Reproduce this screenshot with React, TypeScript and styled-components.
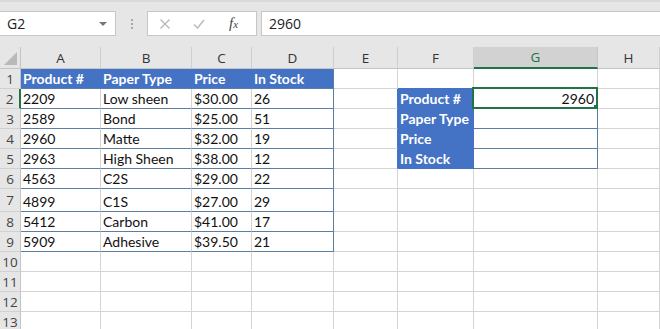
import React from 'react';
import styled, { createGlobalStyle } from 'styled-components';

const GREEN = '#217346';
const BLUE = '#4472c4';
const RULE = '#5b7ea5';
const GRID = '#d4d4d4';
const HEAD_BG = '#e6e6e6';

const GlobalStyle = createGlobalStyle`
  html, body {
    margin: 0;
    padding: 0;
    background: #fff;
    overflow: hidden;
  }
  body {
    font-family: Lato, "Open Sans", sans-serif;
  }
`;

type CellSpec = {
  text?: string;
  bold?: boolean;
  fill?: string;
  right?: boolean;
  bb?: string;
  br?: string;
  selected?: boolean;
};

const COLS = ['A', 'B', 'C', 'D', 'E', 'F', 'G', 'H'];
const ROW_HEIGHTS = [20, 20, 20, 20, 20, 20, 23, 20, 20, 20, 20, 20, 20];

const products = [
  ['Product #', 'Paper Type', 'Price', 'In Stock'],
  ['2209', 'Low sheen', '$30.00', '26'],
  ['2589', 'Bond', '$25.00', '51'],
  ['2960', 'Matte', '$32.00', '19'],
  ['2963', 'High Sheen', '$38.00', '12'],
  ['4563', 'C2S', '$29.00', '22'],
  ['4899', 'C1S', '$27.00', '29'],
  ['5412', 'Carbon', '$41.00', '17'],
  ['5909', 'Adhesive', '$39.50', '21'],
];

const lookupLabels = ['Product #', 'Paper Type', 'Price', 'In Stock'];

const getCell = (row: number, col: number): CellSpec => {
  // data table A1:D9
  if (row <= 9 && col <= 3) {
    const text = products[row - 1][col];
    if (row === 1) {
      return { text, bold: true, fill: BLUE, bb: RULE, br: col === 3 ? RULE : BLUE };
    }
    return { text, bb: RULE, br: col === 3 ? RULE : undefined };
  }
  // lookup labels F2:F5
  if (col === 5 && row >= 2 && row <= 5) {
    return { text: lookupLabels[row - 2], bold: true, fill: BLUE, bb: BLUE, br: BLUE };
  }
  if (col === 5 && row === 1) return { bb: BLUE };
  if (col === 4 && row >= 2 && row <= 5) return { br: BLUE };
  // lookup values G2:G5
  if (col === 6 && row >= 2 && row <= 5) {
    return {
      text: row === 2 ? '2960' : undefined,
      right: true,
      bb: RULE,
      br: RULE,
      selected: row === 2,
    };
  }
  return {};
};

const App: React.FC = () => {
  return (
    <Window>
      <GlobalStyle />
      <FormulaBar>
        <NameBox>
          <span>G2</span>
          <DropCaret />
        </NameBox>
        <Grip>
          <i />
          <i />
          <i />
        </Grip>
        <ActionBox>
          <ActionIcon viewBox="0 0 12 12">
            <path d="M1.5 1.5 L10.5 10.5 M10.5 1.5 L1.5 10.5" />
          </ActionIcon>
          <ActionIcon viewBox="0 0 12 12">
            <path d="M1 6.5 L4.5 10 L11 2" />
          </ActionIcon>
          <Fx>
            f<small>x</small>
          </Fx>
        </ActionBox>
        <FormulaInput>2960</FormulaInput>
      </FormulaBar>

      <Sheet>
        <Corner>
          <svg width="13" height="13" viewBox="0 0 13 13">
            <path d="M13 0 L13 13 L0 13 Z" fill="#b9b9b9" />
          </svg>
        </Corner>
        {COLS.map((c) => (
          <ColHead key={c} $active={c === 'G'}>
            {c}
          </ColHead>
        ))}

        {ROW_HEIGHTS.map((_, i) => {
          const row = i + 1;
          return (
            <React.Fragment key={row}>
              <RowHead $active={row === 2}>{row}</RowHead>
              {COLS.map((c, col) => {
                const cell = getCell(row, col);
                return (
                  <Cell
                    key={c + row}
                    $fill={cell.fill}
                    $bold={cell.bold}
                    $right={cell.right}
                    $bb={cell.bb}
                    $br={cell.br}
                  >
                    {cell.text}
                    {cell.selected && (
                      <>
                        <Selection />
                        <FillHandle />
                      </>
                    )}
                  </Cell>
                );
              })}
            </React.Fragment>
          );
        })}
      </Sheet>
    </Window>
  );
};

export default App;

const Window = styled.div`
  width: 660px;
  height: 329px;
  overflow: hidden;
  background: #fff;
`;

const FormulaBar = styled.div`
  display: flex;
  align-items: center;
  height: 47px;
  box-sizing: border-box;
  background: ${HEAD_BG};
  border-top: 2px solid #dadada;
  padding-bottom: 2px;
`;

const NameBox = styled.div`
  display: flex;
  align-items: center;
  justify-content: space-between;
  width: 116px;
  height: 25px;
  box-sizing: border-box;
  background: #fff;
  border: 1px solid #c6c6c6;
  border-left: none;
  padding: 0 8px 0 7px;
  font-family: "Open Sans", sans-serif;
  font-size: 14px;
  color: #222;
`;

const DropCaret = styled.span`
  width: 0;
  height: 0;
  border-left: 4px solid transparent;
  border-right: 4px solid transparent;
  border-top: 4px solid #777;
`;

const Grip = styled.div`
  display: flex;
  flex-direction: column;
  gap: 2px;
  width: 31px;
  align-items: center;

  i {
    width: 2px;
    height: 2px;
    background: #a9a9a9;
  }
`;

const ActionBox = styled.div`
  display: flex;
  align-items: center;
  width: 110px;
  height: 25px;
  box-sizing: border-box;
  background: #fff;
  border: 1px solid #c6c6c6;
  padding: 0 0 0 11px;
  gap: 22px;
`;

const ActionIcon = styled.svg`
  width: 12px;
  height: 12px;
  fill: none;
  stroke: #b8b8b8;
  stroke-width: 1.4;
`;

const Fx = styled.span`
  margin-left: 2px;
  font-family: "Liberation Serif", serif;
  font-style: italic;
  font-size: 15px;
  color: #444;

  small {
    font-size: 11px;
  }
`;

const FormulaInput = styled.div`
  flex: 1;
  height: 25px;
  margin-left: 4px;
  box-sizing: border-box;
  background: #fff;
  border: 1px solid #c6c6c6;
  border-right: none;
  padding: 2px 0 0 7px;
  font-family: "Open Sans", sans-serif;
  font-size: 14px;
  color: #222;
`;

const Sheet = styled.div`
  display: grid;
  grid-template-columns: 21px 80px 91px 60px 82px 64px 76px 124px 1fr;
  grid-template-rows: 22px ${ROW_HEIGHTS.map((h) => `${h}px`).join(' ')};
`;

const Corner = styled.div`
  display: flex;
  align-items: flex-end;
  justify-content: flex-end;
  padding: 0 3px 3px 0;
  background: ${HEAD_BG};
  border-right: 1px solid #c4c4c4;
  border-bottom: 1px solid #c4c4c4;
`;

const ColHead = styled.div<{ $active?: boolean }>`
  display: flex;
  align-items: center;
  justify-content: center;
  background: ${(p) => (p.$active ? '#d2d2d2' : HEAD_BG)};
  color: ${(p) => (p.$active ? GREEN : '#333')};
  border-right: 1px solid ${(p) => (p.$active ? '#c6c6c6' : '#cfcfcf')};
  border-bottom: ${(p) => (p.$active ? `2px solid ${GREEN}` : '1px solid #c4c4c4')};
  font-family: "Open Sans", sans-serif;
  font-size: 13.5px;
`;

const RowHead = styled.div<{ $active?: boolean }>`
  display: flex;
  align-items: center;
  justify-content: center;
  background: ${HEAD_BG};
  color: #444;
  border-right: ${(p) => (p.$active ? `2px solid ${GREEN}` : '1px solid #c4c4c4')};
  border-bottom: 1px solid #d0d0d0;
  font-family: "Open Sans", sans-serif;
  font-size: 13.5px;
`;

const Cell = styled.div<{
  $fill?: string;
  $bold?: boolean;
  $right?: boolean;
  $bb?: string;
  $br?: string;
}>`
  position: relative;
  display: flex;
  align-items: flex-end;
  justify-content: ${(p) => (p.$right ? 'flex-end' : 'flex-start')};
  padding: 0 3px 0 2px;
  white-space: nowrap;
  background: ${(p) => p.$fill || '#fff'};
  color: ${(p) => (p.$fill ? '#fff' : '#111')};
  font-weight: ${(p) => (p.$bold ? 700 : 400)};
  font-size: 14px;
  line-height: 18px;
  border-right: 1px solid ${(p) => p.$br || GRID};
  border-bottom: 1px solid ${(p) => p.$bb || GRID};
`;

const Selection = styled.div`
  position: absolute;
  top: -2px;
  left: -2px;
  right: -1px;
  bottom: -1px;
  border: 2px solid ${GREEN};
  pointer-events: none;
`;

const FillHandle = styled.div`
  position: absolute;
  right: -3px;
  bottom: -3px;
  width: 5px;
  height: 5px;
  background: ${GREEN};
  border: 1px solid #fff;
  border-top: none;
  border-left: none;
`;
